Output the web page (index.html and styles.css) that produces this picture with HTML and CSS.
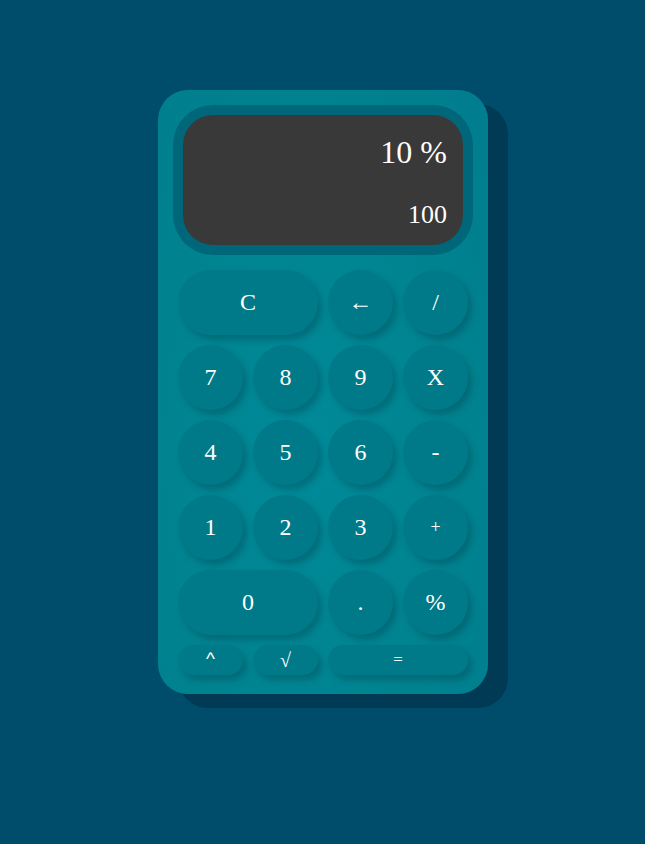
FILE: index.html
```html
<!DOCTYPE html>
<html>
<head>
<meta charset="utf-8">
<link rel="stylesheet" href="styles.css">
</head>
<body>
<div class="calc">
  <div class="display">
    <div class="screen">
      <div class="expr">10 %</div>
      <div class="result">100</div>
    </div>
  </div>
  <div class="keys">
    <button class="key wide">C</button>
    <button class="key">←</button>
    <button class="key">/</button>
    <button class="key">7</button>
    <button class="key">8</button>
    <button class="key">9</button>
    <button class="key">X</button>
    <button class="key">4</button>
    <button class="key">5</button>
    <button class="key">6</button>
    <button class="key">-</button>
    <button class="key">1</button>
    <button class="key">2</button>
    <button class="key">3</button>
    <button class="key small">+</button>
    <button class="key wide">0</button>
    <button class="key">.</button>
    <button class="key">%</button>
    <button class="key short caret">^</button>
    <button class="key short">√</button>
    <button class="key short wide small">=</button>
  </div>
</div>
</body>
</html>
```
FILE: styles.css
```css
html, body {
  margin: 0;
  padding: 0;
}
body {
  background: #004d6b;
  width: 645px;
  height: 844px;
  font-family: "Liberation Serif", "DejaVu Serif", serif;
  padding-top: 90px;
  padding-left: 158px;
  box-sizing: border-box;
}
.calc {
  width: 330px;
  height: 604px;
  box-sizing: border-box;
  border-radius: 30px;
  background: radial-gradient(ellipse at 45% 60%, #008a99 0%, #00838f 60%, #007d90 100%);
  box-shadow: 20px 14px 0 #003a55;
  padding: 15px 20px 0 20px;
}
.display {
  margin: 0 -5px;
  background: #00667a;
  border-radius: 40px;
  padding: 10px;
}
.screen {
  background: #393939;
  border-radius: 30px;
  height: 130px;
  box-sizing: border-box;
  padding: 17px 16px 0 16px;
  color: #ffffff;
  text-align: right;
  display: flex;
  flex-direction: column;
}
.expr {
  font-size: 32px;
  line-height: 40px;
}
.result {
  font-size: 26px;
  line-height: 30px;
  margin-top: 28px;
}
.keys {
  margin-top: 15px;
  display: grid;
  grid-template-columns: repeat(4, 65px);
  grid-auto-rows: 65px;
  gap: 10px;
}
.keys .short {
  height: 30px;
}
.key {
  border: none;
  border-radius: 33px;
  background: #007a88;
  color: #ffffff;
  font-family: "Liberation Serif", "DejaVu Serif", serif;
  font-size: 24px;
  padding: 0;
  box-shadow: 4px 5px 6px rgba(0, 60, 75, 0.35);
  display: flex;
  align-items: center;
  justify-content: center;
}
.key.small {
  font-size: 18px;
}
.key.wide {
  grid-column: span 2;
}
.key.short {
  border-radius: 15px;
  font-size: 20px;
}
.key.short.small {
  font-size: 17px;
}
.key.caret {
  font-size: 19px;
  font-family: "Liberation Sans", sans-serif;
  padding-bottom: 3px;
}
```
